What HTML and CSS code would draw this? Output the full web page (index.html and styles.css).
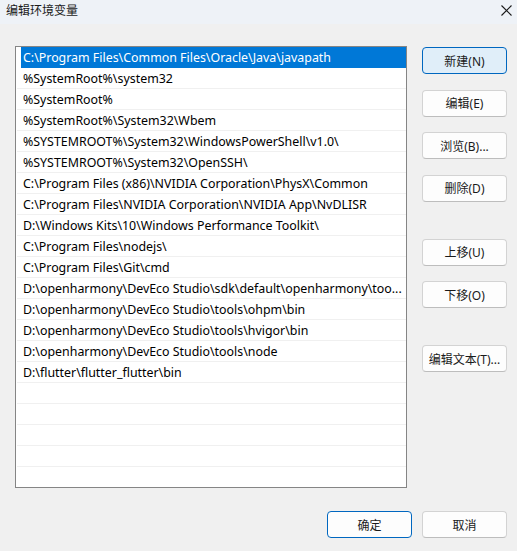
FILE: index.html
```html
<!DOCTYPE html>
<html lang="zh-CN">
<head>
    <meta charset="UTF-8">
    <meta name="viewport" content="width=device-width, initial-scale=1.0">
    <title>编辑环境变量</title>
    <link rel="stylesheet" href="styles.css">
</head>
<body>
    <div class="titlebar">
        <span class="title">编辑环境变量</span>
        <svg class="close" width="11" height="11" viewBox="0 0 11 11">
            <path d="M0.5 0.5 L10.5 10.5 M10.5 0.5 L0.5 10.5" stroke="#1a1a1a" stroke-width="1.1" fill="none"/>
        </svg>
    </div>

    <div class="content">
        <div class="main">
            <ul class="pathList">
                <li class="sel">C:\Program Files\Common Files\Oracle\Java\javapath</li>
                <li>%SystemRoot%\system32</li>
                <li>%SystemRoot%</li>
                <li>%SystemRoot%\System32\Wbem</li>
                <li>%SYSTEMROOT%\System32\WindowsPowerShell\v1.0\</li>
                <li>%SYSTEMROOT%\System32\OpenSSH\</li>
                <li>C:\Program Files (x86)\NVIDIA Corporation\PhysX\Common</li>
                <li>C:\Program Files\NVIDIA Corporation\NVIDIA App\NvDLISR</li>
                <li>D:\Windows Kits\10\Windows Performance Toolkit\</li>
                <li>C:\Program Files\nodejs\</li>
                <li>C:\Program Files\Git\cmd</li>
                <li>D:\openharmony\DevEco Studio\sdk\default\openharmony\too...</li>
                <li>D:\openharmony\DevEco Studio\tools\ohpm\bin</li>
                <li>D:\openharmony\DevEco Studio\tools\hvigor\bin</li>
                <li>D:\openharmony\DevEco Studio\tools\node</li>
                <li>D:\flutter\flutter_flutter\bin</li>
                <li></li>
                <li></li>
                <li></li>
                <li></li>
                <li></li>
            </ul>

            <div class="sideBtns">
                <button class="btn primary">新建(N)</button>
                <button class="btn">编辑(E)</button>
                <button class="btn">浏览(B)...</button>
                <button class="btn">删除(D)</button>
                <button class="btn spaced">上移(U)</button>
                <button class="btn">下移(O)</button>
                <button class="btn spaced">编辑文本(T)...</button>
            </div>
        </div>

        <div class="footer">
            <button class="btn default">确定</button>
            <button class="btn">取消</button>
        </div>
    </div>
</body>
</html>
```

FILE: styles.css
```css
* {
    margin: 0;
    padding: 0;
    box-sizing: border-box;
}

body {
    background-color: #f0f0f0;
    font-family: "Noto Sans", "Noto Sans CJK SC", sans-serif;
    font-size: 12px;
    color: #000;
    width: 517px;
    height: 551px;
    overflow: hidden;
}

.titlebar {
    height: 24px;
    background-color: #eef2f7;
    display: flex;
    align-items: center;
    justify-content: space-between;
    padding: 0 5px 4px 6px;
}

.title {
    font-size: 12px;
    color: #1a1a1a;
}

.content {
    padding: 22px 10px 0 15px;
}

.main {
    display: flex;
    gap: 15px;
}

.pathList {
    list-style: none;
    width: 392px;
    height: 442px;
    background-color: #fff;
    border: 1px solid #858585;
    overflow: hidden;
}

.pathList li {
    height: 21px;
    line-height: 22px;
    font-size: 12.4px;
    margin-left: 1px;
    padding-left: 6px;
    border-bottom: 1px solid #f0f0f0;
    white-space: nowrap;
    overflow: hidden;
}

.pathList li.sel {
    margin-left: 5px;
    padding-left: 2px;
    background-color: #0078d7;
    color: #fff;
    border-bottom-color: #0078d7;
}

.sideBtns {
    display: flex;
    flex-direction: column;
    gap: 15.5px;
    padding-top: 1px;
}

.btn {
    width: 85px;
    height: 27px;
    font-family: inherit;
    font-size: 12px;
    color: #1a1a1a;
    background-color: #fdfdfd;
    border: 1px solid #d3d3d3;
    border-bottom-color: #bdbdbd;
    border-radius: 4px;
}

.btn.primary {
    background-color: #e0eef9;
    border-color: #0067c0;
}

.btn.default {
    border-color: #0067c0;
}

.btn.spaced {
    margin-top: 21.5px;
}

.footer {
    display: flex;
    justify-content: flex-end;
    gap: 10px;
    margin-top: 23px;
}
```
